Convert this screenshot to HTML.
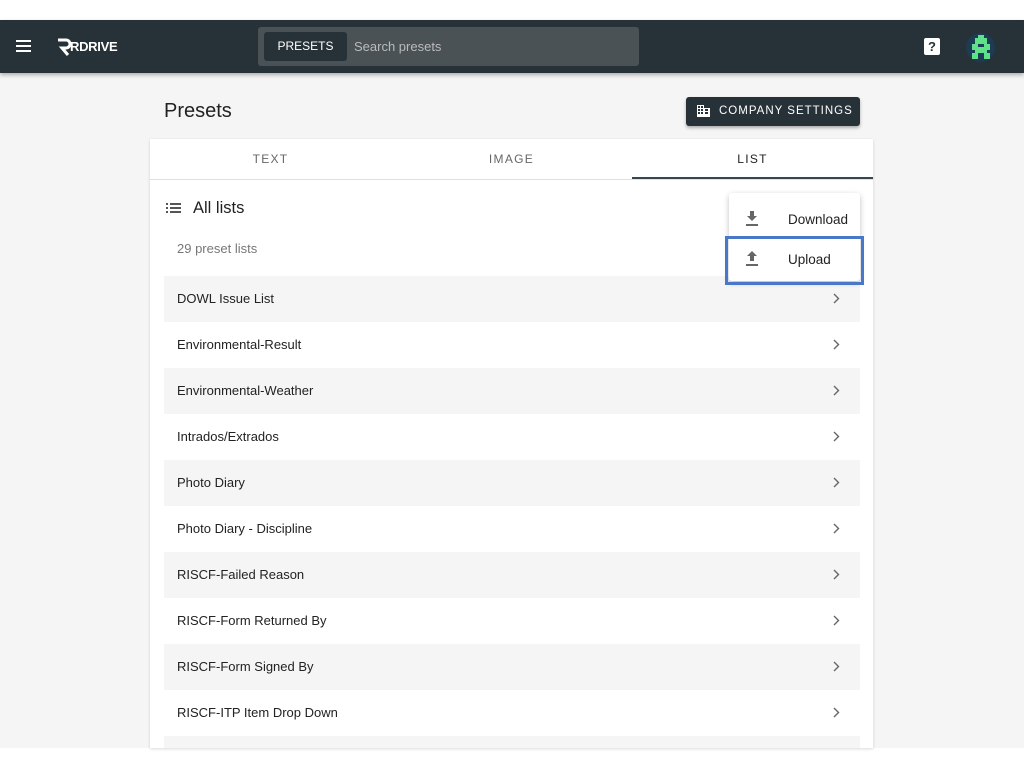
<!DOCTYPE html>
<html><head><style>
*{box-sizing:border-box;margin:0;padding:0}
body{width:1024px;height:768px;background:#fff;font-family:"Liberation Sans",Arial,sans-serif;position:relative;overflow:hidden;color:#212121}
.hdr{position:absolute;top:20px;left:0;width:1024px;height:53px;background:#263238;box-shadow:0 2px 4px rgba(0,0,0,.3);z-index:2}
.main{position:absolute;top:73px;left:0;width:1024px;height:675px;background:#f5f5f5}
.card{position:absolute;left:150px;top:139px;width:723px;height:609px;background:#fff;box-shadow:0 1px 3px rgba(0,0,0,.15)}
.tab{position:absolute;top:0;height:40px;line-height:40px;font-size:12px;letter-spacing:1.3px;color:#666;text-align:center;width:241px}
.row{position:absolute;left:14px;width:696px;height:46px;line-height:46px;font-size:13px;padding-left:13px;color:#222}
.row.g{background:#f5f5f5}
.row svg{position:absolute;right:20px;top:17px}
</style></head><body>
<div class="hdr">
 <div style="position:absolute;left:16px;top:20px;width:15px;height:2px;background:#fff;box-shadow:0 5px 0 #fff,0 10px 0 #fff"></div>
 <svg style="position:absolute;left:56px;top:17px" width="16" height="20" viewBox="0 0 16 20"><path d="M2 3h8a4 4 0 0 1 0 8H6l6 7" stroke="#fff" stroke-width="3" fill="none"/></svg>
 <div style="position:absolute;left:70px;top:19px;color:#fff;font-size:13px;font-weight:bold;letter-spacing:-.3px">RDRIVE</div>
 <div style="position:absolute;left:258px;top:7px;width:381px;height:39px;background:#4a5256;border-radius:3px">
  <div style="position:absolute;left:6px;top:5px;width:83px;height:29px;background:#263238;border-radius:3px;color:#fff;font-size:12px;text-align:center;line-height:29px">PRESETS</div>
  <div style="position:absolute;left:96px;top:12px;color:#bbb;font-size:13px">Search presets</div>
 </div>
 <div style="position:absolute;left:924px;top:18px;width:16px;height:17px;background:#fff;border-radius:2px;color:#263238;font-weight:bold;font-size:13px;text-align:center;line-height:17px">?</div>
 <div style="position:absolute;left:966px;top:13px;width:29px;height:29px;border-radius:50%;background:#1d3b52"></div>
 <svg style="position:absolute;left:969px;top:15px" width="24" height="24" viewBox="0 0 8 8"><path fill="#5fe08a" d="M3 0h2v1H3zM2 1h4v2H2zM1 3h2v2H1zM5 3h2v2H5zM3 4h2v1H3zM2 5h4v1H2zM1 6h2v2H1zM5 6h2v2H5z"/></svg>
</div>
<div class="main"></div>
<div style="position:absolute;left:164px;top:100px;font-size:20px;color:#222">Presets</div>
<div style="position:absolute;left:686px;top:97px;width:174px;height:29px;background:#263238;border-radius:3px;box-shadow:0 2px 3px rgba(0,0,0,.3);color:#fff;font-size:11.5px;letter-spacing:1px;line-height:29px;padding-left:33px;white-space:nowrap">COMPANY SETTINGS</div>
<svg style="position:absolute;left:697px;top:105px" width="13" height="12" viewBox="0 0 13 12"><path fill="#fff" d="M0 0h7v3h6v9H0zM1 1v2h2V1zM4 1v2h2V1zM1 4v2h2V4zM4 4v2h2V4zM1 7v2h2V7zM4 7v2h2V7zM8 4v2h3V4zM8 7v2h3V7z"/></svg>
<div class="card">
 <div class="tab" style="left:0">TEXT</div>
 <div class="tab" style="left:241px">IMAGE</div>
 <div class="tab" style="left:482px;color:#222">LIST</div>
 <div style="position:absolute;left:0;top:40px;width:723px;height:1px;background:#e0e0e0"></div>
 <div style="position:absolute;left:482px;top:38px;width:241px;height:2px;background:#37474f"></div>
 <svg style="position:absolute;left:16px;top:64px" width="15" height="10" viewBox="0 0 15 10"><path fill="#555" d="M0 0h2v2H0zM4 0h11v2H4zM0 4h2v2H0zM4 4h11v2H4zM0 8h2v2H0zM4 8h11v2H4z"/></svg>
 <div style="position:absolute;left:43px;top:60px;font-size:16.5px;color:#222">All lists</div>
 <div style="position:absolute;left:27px;top:102px;font-size:13px;color:#777">29 preset lists</div>
 <div class="row g" style="top:137px">DOWL Issue List<svg width="7" height="11" viewBox="0 0 7 11"><path d="M1 1l4.5 4.5L1 10" stroke="#666" stroke-width="1.4" fill="none"/></svg></div>
 <div class="row" style="top:183px">Environmental-Result<svg width="7" height="11" viewBox="0 0 7 11"><path d="M1 1l4.5 4.5L1 10" stroke="#666" stroke-width="1.4" fill="none"/></svg></div>
 <div class="row g" style="top:229px">Environmental-Weather<svg width="7" height="11" viewBox="0 0 7 11"><path d="M1 1l4.5 4.5L1 10" stroke="#666" stroke-width="1.4" fill="none"/></svg></div>
 <div class="row" style="top:275px">Intrados/Extrados<svg width="7" height="11" viewBox="0 0 7 11"><path d="M1 1l4.5 4.5L1 10" stroke="#666" stroke-width="1.4" fill="none"/></svg></div>
 <div class="row g" style="top:321px">Photo Diary<svg width="7" height="11" viewBox="0 0 7 11"><path d="M1 1l4.5 4.5L1 10" stroke="#666" stroke-width="1.4" fill="none"/></svg></div>
 <div class="row" style="top:367px">Photo Diary - Discipline<svg width="7" height="11" viewBox="0 0 7 11"><path d="M1 1l4.5 4.5L1 10" stroke="#666" stroke-width="1.4" fill="none"/></svg></div>
 <div class="row g" style="top:413px">RISCF-Failed Reason<svg width="7" height="11" viewBox="0 0 7 11"><path d="M1 1l4.5 4.5L1 10" stroke="#666" stroke-width="1.4" fill="none"/></svg></div>
 <div class="row" style="top:459px">RISCF-Form Returned By<svg width="7" height="11" viewBox="0 0 7 11"><path d="M1 1l4.5 4.5L1 10" stroke="#666" stroke-width="1.4" fill="none"/></svg></div>
 <div class="row g" style="top:505px">RISCF-Form Signed By<svg width="7" height="11" viewBox="0 0 7 11"><path d="M1 1l4.5 4.5L1 10" stroke="#666" stroke-width="1.4" fill="none"/></svg></div>
 <div class="row" style="top:551px">RISCF-ITP Item Drop Down<svg width="7" height="11" viewBox="0 0 7 11"><path d="M1 1l4.5 4.5L1 10" stroke="#666" stroke-width="1.4" fill="none"/></svg></div>
 <div class="row g" style="top:597px;height:12px"></div>
</div>
<div style="position:absolute;left:729px;top:193px;width:131px;height:88px;background:#fff;box-shadow:0 2px 6px rgba(0,0,0,.25);border-radius:3px"></div>
<div style="position:absolute;left:788px;top:212px;font-size:13.5px;color:#222">Download</div>
<svg style="position:absolute;left:745px;top:211px" width="14" height="15" viewBox="0 0 14 15"><path fill="#666" d="M5 0h4v5h3L7 10 2 5h3zM1 13h12v2H1z"/></svg>
<div style="position:absolute;left:725px;top:236px;width:139px;height:49px;border:3px solid #4a78c8"></div>
<div style="position:absolute;left:788px;top:252px;font-size:13.5px;color:#222">Upload</div>
<svg style="position:absolute;left:745px;top:251px" width="14" height="15" viewBox="0 0 14 15"><path fill="#666" d="M5 10h4V5h3L7 0 2 5h3zM1 13h12v2H1z"/></svg>
</body></html>
